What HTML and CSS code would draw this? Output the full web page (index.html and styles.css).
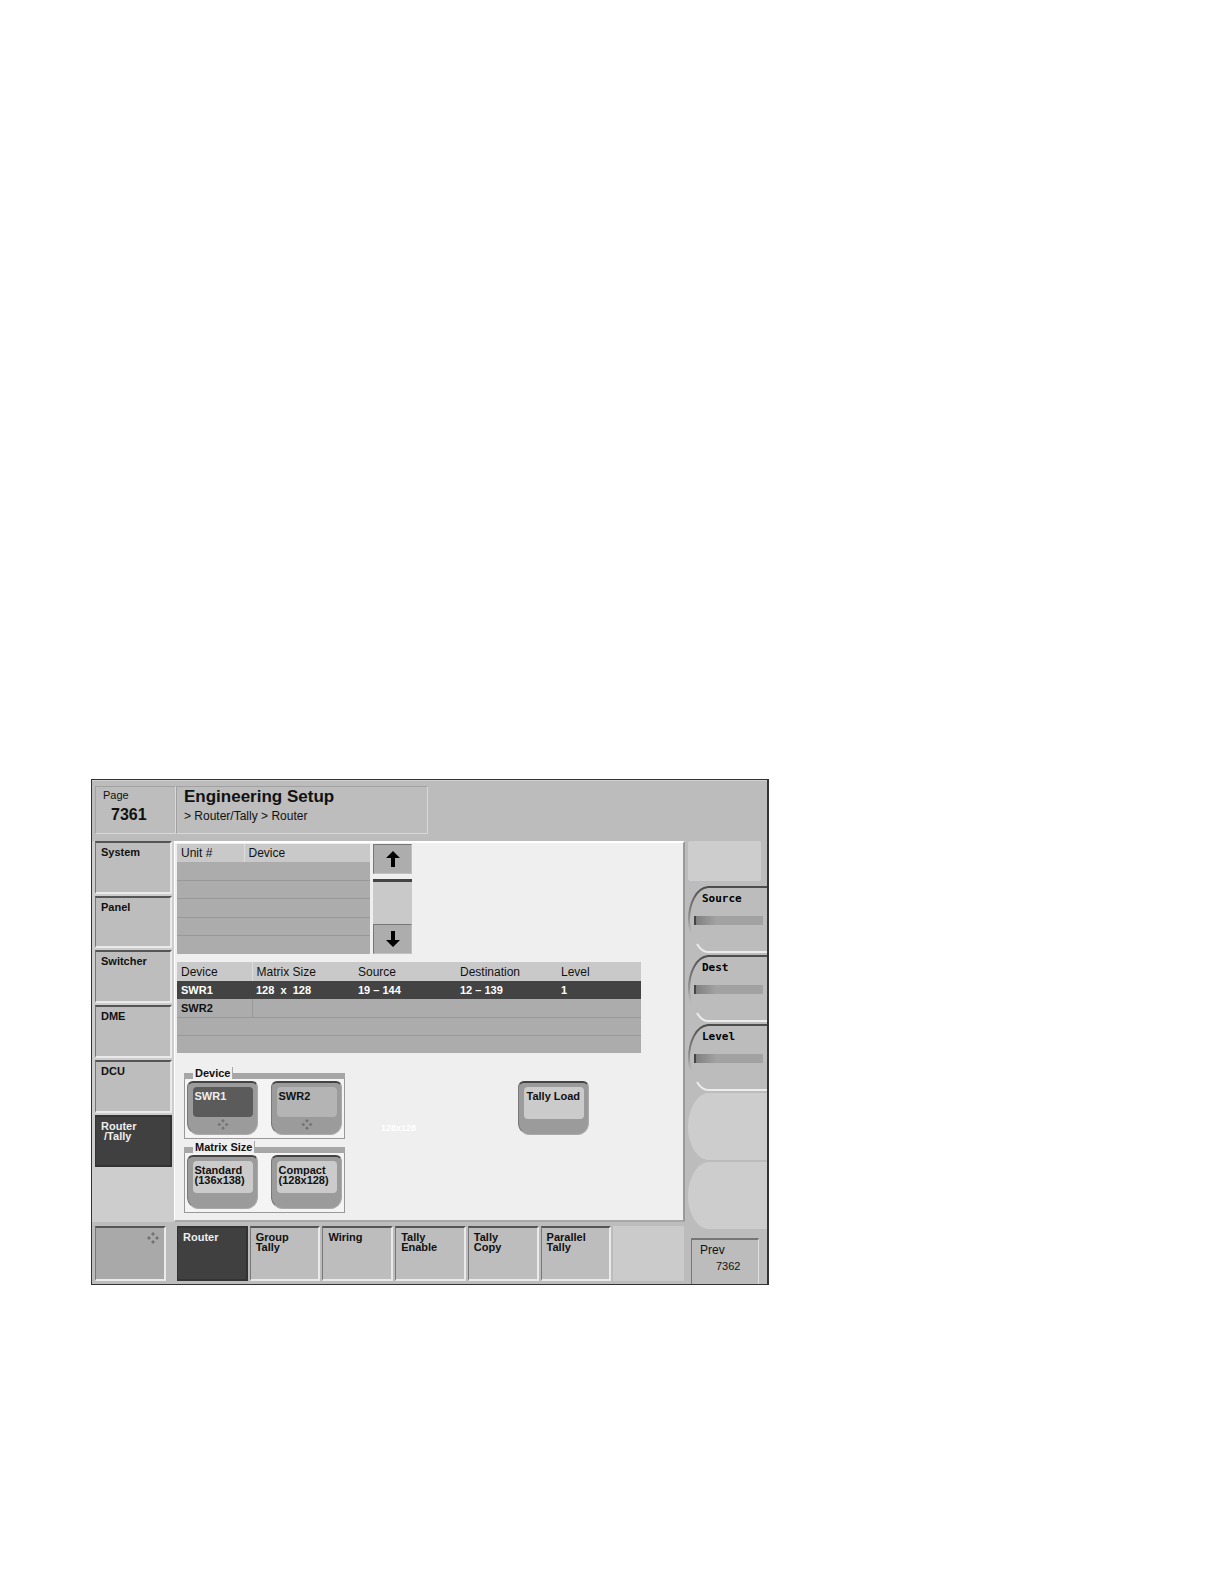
FILE: index.html
```html
<!DOCTYPE html>
<html lang="en">
<head>
  <meta charset="UTF-8">
  <meta name="viewport" content="width=device-width, initial-scale=1.0">
  <title>Engineering Setup - Router/Tally</title>
  <link rel="stylesheet" href="styles.css">
</head>
<body>

<svg class="defs" width="0" height="0" aria-hidden="true">
  <defs>
    <linearGradient id="fade" x1="0" y1="0" x2="0" y2="1">
      <stop offset="0" stop-color="#4c4c4c"/>
      <stop offset="0.6" stop-color="#888"/>
      <stop offset="1" stop-color="#bcbcbc"/>
    </linearGradient>
    <symbol id="knob-edge" viewBox="0 0 79 67" preserveAspectRatio="none">
      <path d="M79 0H20C8 1 0 18 0 34C0 50 8 66 20 67H79Z" fill="#bcbcbc"/>
      <path d="M79 1H20C8 2 1 18 1 34C1 39 2 43 3 47" fill="none" stroke="url(#fade)" stroke-width="2"/>
      <path d="M9 58C12 63 16 66 20 66H79" fill="none" stroke="#ececec" stroke-width="2"/>
    </symbol>
    <symbol id="knob-blank" viewBox="0 0 79 67" preserveAspectRatio="none">
      <path d="M79 0H20C8 1 0 18 0 34C0 50 8 66 20 67H79Z" fill="#cdcdcd"/>
    </symbol>
    <symbol id="dots" viewBox="0 0 12 12">
      <path d="M6 0l2 2-2 2-2-2zM6 8l2 2-2 2-2-2zM2 4l2 2-2 2-2-2zM10 4l2 2-2 2-2-2z" fill="#737373"/>
    </symbol>
  </defs>
</svg>

<div class="screen">
  <header class="top">
    <div class="page-box">
      <div class="page-label">Page</div>
      <div class="page-number">7361</div>
    </div>
    <div class="title-box">
      <h1>Engineering Setup</h1>
      <div class="path">&gt; Router/Tally &gt; Router</div>
    </div>
  </header>

  <nav class="side">
    <button class="key">System</button>
    <button class="key">Panel</button>
    <button class="key">Switcher</button>
    <button class="key">DME</button>
    <button class="key">DCU</button>
    <button class="key on">Router<br>&nbsp;/Tally</button>
  </nav>

  <main class="panel">
    <div class="units">
      <table class="unit-table">
        <tr><th class="unit-col">Unit #</th><th>Device</th></tr>
        <tr><td colspan="2"></td></tr>
        <tr><td colspan="2"></td></tr>
        <tr><td colspan="2"></td></tr>
        <tr><td colspan="2"></td></tr>
        <tr><td colspan="2"></td></tr>
      </table>
      <div class="scroll">
        <button class="arrow" aria-label="Up">
          <svg width="14" height="16" viewBox="0 0 14 16"><path d="M7 0L14 7H9V16H5V7H0Z"/></svg>
        </button>
        <div class="track"></div>
        <button class="arrow" aria-label="Down">
          <svg width="14" height="16" viewBox="0 0 14 16"><path d="M7 16L14 9H9V0H5V9H0Z"/></svg>
        </button>
      </div>
    </div>

    <table class="router-table">
      <tr><th class="c1">Device</th><th class="c2">Matrix Size</th><th class="c3">Source</th><th class="c4">Destination</th><th>Level</th></tr>
      <tr class="selected"><td>SWR1</td><td>128 &nbsp;x &nbsp;128</td><td>19 – 144</td><td>12 – 139</td><td>1</td></tr>
      <tr class="next"><td>SWR2</td><td></td><td></td><td></td><td></td></tr>
      <tr><td></td><td></td><td></td><td></td><td></td></tr>
      <tr><td></td><td></td><td></td><td></td><td></td></tr>
    </table>

    <div class="controls">
      <div class="groups">
        <section class="group">
          <h2><span>Device</span></h2>
          <div class="group-body">
            <button class="soft dark"><span>SWR1</span><svg width="12" height="12"><use href="#dots"/></svg></button>
            <button class="soft mid"><span>SWR2</span><svg width="12" height="12"><use href="#dots"/></svg></button>
          </div>
        </section>
        <section class="group">
          <h2><span>Matrix Size</span></h2>
          <div class="group-body">
            <button class="soft"><span>Standard<br>(136x138)</span></button>
            <button class="soft"><span>Compact<br>(128x128)</span></button>
          </div>
        </section>
      </div>
      <div class="ghost">128x128</div>
      <button class="soft load"><span>Tally Load</span></button>
    </div>
  </main>

  <aside class="knobs">
    <div class="knob-top"></div>
    <button class="knob"><svg class="edge"><use href="#knob-edge"/></svg><span>Source</span><i></i></button>
    <button class="knob"><svg class="edge"><use href="#knob-edge"/></svg><span>Dest</span><i></i></button>
    <button class="knob"><svg class="edge"><use href="#knob-edge"/></svg><span>Level</span><i></i></button>
    <div class="knob"><svg class="edge"><use href="#knob-blank"/></svg></div>
    <div class="knob"><svg class="edge"><use href="#knob-blank"/></svg></div>
    <button class="prev">Prev<small>7362</small></button>
  </aside>

  <button class="key menu" aria-label="Menu"><svg width="12" height="12"><use href="#dots"/></svg></button>

  <nav class="tabs">
    <button class="key on">Router</button>
    <button class="key">Group<br>Tally</button>
    <button class="key">Wiring</button>
    <button class="key">Tally<br>Enable</button>
    <button class="key">Tally<br>Copy</button>
    <button class="key">Parallel<br>Tally</button>
    <div class="blank"></div>
  </nav>
</div>

</body>
</html>
```
FILE: styles.css
```css
* {
  box-sizing: border-box;
}
body {
  margin: 0;
  padding: 779px 449px 0 91px;
  background: #fff;
  color: #111;
  font-family: "Liberation Sans", Arial, sans-serif;
}
button {
  margin: 0;
  padding: 0;
  border: 0;
  background: none;
  color: inherit;
  font: inherit;
  text-align: left;
}
.defs {
  position: absolute;
}
.screen {
  display: grid;
  grid-template-columns: 82px 1fr 82px;
  grid-template-rows: 61px 381px 62px;
  border: 1px solid #333;
  border-right-width: 2px;
  background: #bcbcbc;
}

/* header */
.top {
  grid-column: 1 / 4;
  display: flex;
  padding: 5px 0 7px 3px;
  border-top: 1px solid #d0d0d0;
}
.page-box,
.title-box {
  border: 1px solid #a2a2a2;
  border-right-color: #d8d8d8;
  border-bottom-color: #d8d8d8;
  background: #bdbdbd;
}
.page-box {
  width: 81px;
  padding: 2px 7px;
}
.title-box {
  width: 252px;
  padding: 0 7px;
}
.page-label {
  font-size: 11px;
  line-height: 12px;
}
.page-number {
  padding-top: 4px;
  padding-left: 8px;
  font-size: 16px;
  line-height: 20px;
  font-weight: bold;
}
h1 {
  margin: 0;
  font-size: 17px;
  line-height: 20px;
}
.path {
  font-size: 12px;
  line-height: 18px;
}

/* keys */
.side {
  display: grid;
  grid-template-rows: repeat(7, 1fr);
  gap: 2px;
  padding: 0 2px 0 3px;
  background: #cdcdcd;
}
.key {
  display: flex;
  align-items: flex-start;
  padding: 4px 5px;
  border: 1px solid #777;
  border-top: 2px solid #555;
  border-right: 2px solid #eaeaea;
  border-bottom: 2px solid #eaeaea;
  background: #bdbdbd;
  font-size: 11px;
  line-height: 10px;
  font-weight: bold;
}
.key.on {
  border-color: #333;
  background: #404040;
  color: #eee;
}

/* main panel */
.panel {
  padding: 1px 0 0 2px;
  border-top: 2px solid #fff;
  border-left: 1px solid #fff;
  border-right: 2px solid #999;
  border-bottom: 2px solid #a8a8a8;
  background: #efefef;
}
table {
  border-collapse: collapse;
  table-layout: fixed;
  font-size: 12px;
}
th,
td {
  padding: 0 4px;
  text-align: left;
  white-space: nowrap;
}
th {
  background: #c9c9c9;
  font-weight: normal;
}
td {
  background: #acacac;
  border-bottom: 1px solid #989898;
}
tr:last-child td {
  border-bottom: 0;
}
.units {
  display: flex;
  gap: 3px;
  height: 110px;
}
.unit-table {
  width: 193px;
}
.unit-table tr {
  height: 18px;
}
.unit-col {
  width: 67px;
  border-right: 1px solid #ddd;
}
.scroll {
  display: flex;
  flex-direction: column;
  width: 39px;
}
.arrow {
  display: flex;
  align-items: center;
  justify-content: center;
  height: 30px;
  border: 1px solid #777;
  border-right-color: #c0c0c0;
  border-bottom-color: #c0c0c0;
  background: #adadad;
}
.track {
  flex: 1;
  margin-top: 5px;
  border-top: 3px solid #444;
  background: #c9c9c9;
}
.router-table {
  width: 464px;
  margin-top: 8px;
}
.router-table tr {
  height: 18px;
}
.router-table tr:first-child {
  height: 19px;
}
.router-table td {
  font-size: 11px;
  font-weight: bold;
}
.c1 {
  width: 75px;
  border-right: 1px solid #ddd;
}
.c2 {
  width: 102px;
}
.c3 {
  width: 102px;
}
.c4 {
  width: 101px;
}
.selected td {
  border: 0;
  background: #434343;
  color: #fff;
}
.next td:first-child {
  border-right: 1px solid #989898;
}

/* groups of soft buttons */
.controls {
  display: flex;
  padding-top: 14px;
  padding-left: 7px;
}
.groups {
  width: 161px;
}
.group {
  margin-bottom: 2px;
}
.group h2 {
  margin: 0;
  padding-left: 9px;
  height: 12px;
  background: linear-gradient(transparent 6px, #a6a6a6 6px);
  font-size: 11px;
  line-height: 12px;
}
.group h2 span {
  display: inline-block;
  padding: 0 2px;
  border-right: 1px solid #aaa;
  background: #efefef;
}
.group-body {
  display: flex;
  justify-content: space-between;
  padding: 2px;
  border: 1px solid #999;
  border-top: 0;
  background: #f4f4f4;
}
.group-body .soft {
  margin-bottom: 1px;
}
.soft {
  display: flex;
  flex-direction: column;
  align-items: center;
  width: 71px;
  height: 54px;
  padding: 4px;
  border: 1px solid #aaa;
  border-top: 2px solid #444;
  border-left: 1px solid #777;
  border-radius: 6px 6px 12px 12px;
  background: #9b9b9b;
  font-size: 11px;
  line-height: 10px;
  font-weight: bold;
}
.soft span {
  width: 60px;
  height: 32px;
  padding: 4px 2px;
  border-radius: 4px;
  background: #cbcbcb;
  white-space: nowrap;
}
.soft svg {
  margin-top: 2px;
}
.soft.dark span {
  background: #5b5b5b;
  color: #eee;
}
.soft.mid span {
  background: #b4b4b4;
}
.ghost {
  width: 173px;
  padding-top: 55px;
  padding-left: 36px;
  color: #fff;
  font-size: 9px;
  line-height: 12px;
  font-weight: bold;
}
.load {
  margin-top: 14px;
}
.load span {
  padding-left: 3px;
}

/* knob column */
.knobs {
  grid-row: 2 / 4;
  grid-column: 3;
  display: flex;
  flex-direction: column;
  padding-left: 3px;
}
.knob-top {
  height: 40px;
  margin-right: 6px;
  margin-bottom: 5px;
  border-radius: 2px;
  background: #cdcdcd;
}
.knob {
  position: relative;
  display: flex;
  flex-direction: column;
  align-items: stretch;
  justify-content: flex-start;
  height: 67px;
  margin-bottom: 2px;
  padding: 7px 4px 0 6px;
  color: #000;
  font-family: "DejaVu Sans Mono", monospace;
  font-size: 11px;
  line-height: 12px;
  font-weight: bold;
}
.edge {
  position: absolute;
  top: 0;
  left: 0;
  width: 100%;
  height: 100%;
}
.knob span {
  position: relative;
  padding-left: 8px;
}
.knob i {
  position: relative;
  height: 9px;
  margin-top: 11px;
  border-left: 2px solid #444;
  background: linear-gradient(to right, #808080, #a2a2a2 30%);
}
.prev {
  display: flex;
  flex-direction: column;
  flex: 1;
  width: 68px;
  margin-top: 7px;
  margin-left: 3px;
  padding-top: 2px;
  padding-left: 8px;
  border: 1px solid #777;
  border-top: 2px solid #777;
  border-right: 1px solid #e0e0e0;
  border-bottom: 0;
  font-size: 12px;
  line-height: 16px;
}
.prev small {
  padding-left: 16px;
  font-size: 11px;
}

/* bottom row */
.menu {
  width: 71px;
  height: 55px;
  margin-top: 4px;
  margin-left: 3px;
  justify-content: flex-end;
  background: #a9a9a9;
}
.tabs {
  display: grid;
  grid-template-columns: repeat(7, 1fr);
  gap: 2px;
  height: 55px;
  padding: 0 1px 0 3px;
  margin-top: 4px;
}
.blank {
  background: #cbcbcb;
}
```
